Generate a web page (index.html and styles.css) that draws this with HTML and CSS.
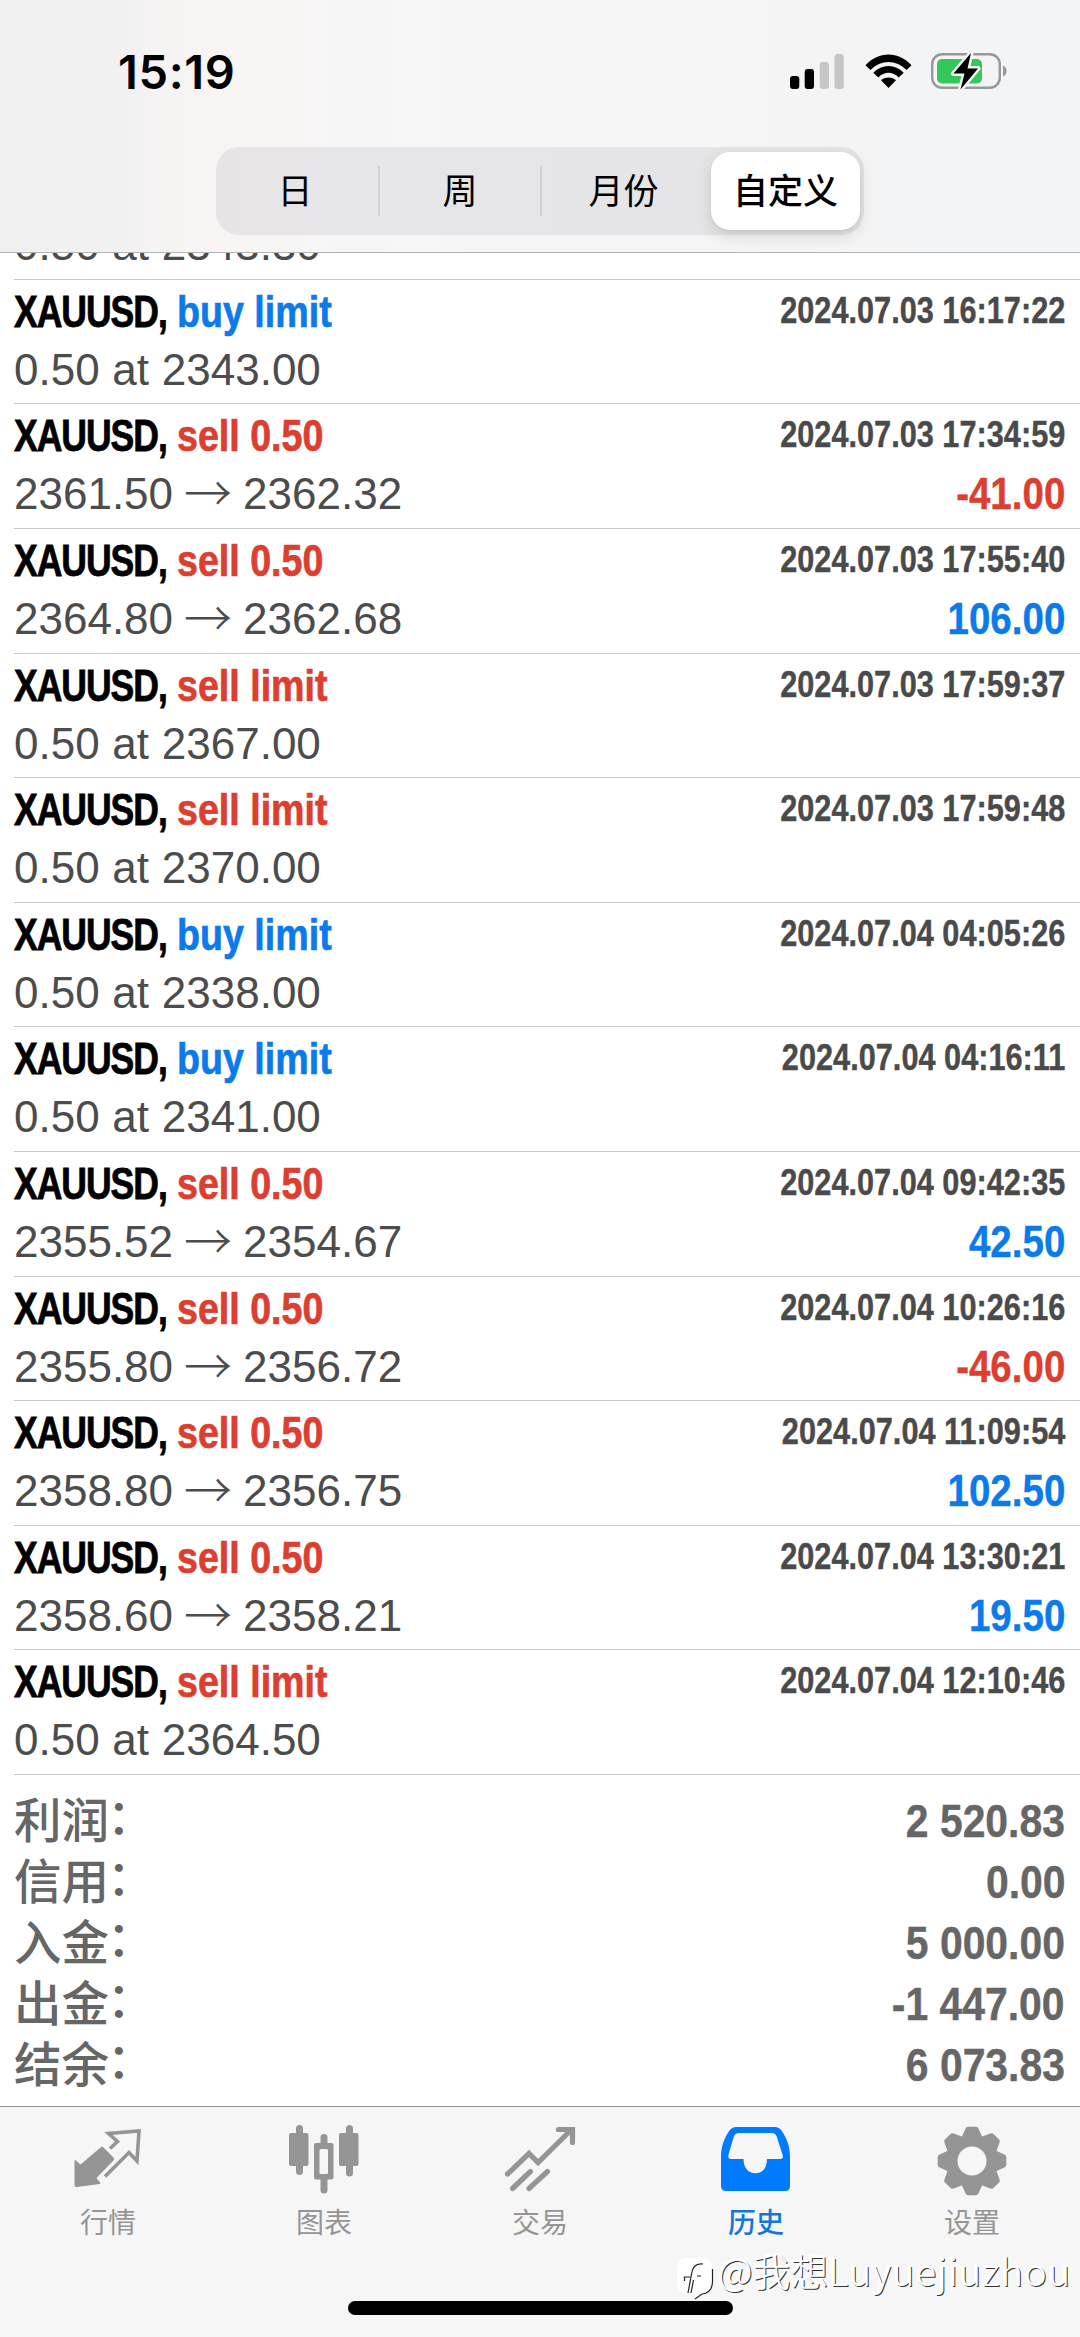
FILE: index.html
```html
<!DOCTYPE html>
<html lang="zh-CN">
<head>
<meta charset="utf-8">
<title>历史</title>
<link rel="stylesheet" href="styles.css">
</head>
<body>
<div class="screen">
  <header class="header">
    <div class="status">
      <span class="clock">15:19</span>
      <div class="status-icons">
        <svg width="54" height="36" viewBox="0 0 54 36"><rect x="0" y="23" width="9.3" height="13" rx="3"/><rect x="14.7" y="16" width="9.3" height="20" rx="3"/><g fill="#c6c6c7"><rect x="29.7" y="9" width="9.3" height="27" rx="3"/><rect x="44.5" y="1" width="9.3" height="35" rx="3"/></g></svg>
        <svg class="wifi" width="47" height="36" viewBox="0 0 47 36"><path d="M0.5 12.2C13.5-2.2 33.5-2.2 46.5 12.2L41.5 17C31.5 6.3 15.5 6.3 5.500 17ZM8.300 19.700C17 10.800 30 10.800 38.700 19.700L33.700 24.500C27.500 18.300 19.500 18.300 13.300 24.500ZM16 27.200C20 23.600 27 23.600 31 27.200L23.500 35Z"/></svg>
        <svg class="battery" width="78" height="42" viewBox="0 0 78 42"><rect x="1.200" y="4.200" width="67.600" height="33.600" rx="10" fill="none" stroke="#98989a" stroke-width="2.400"/><path d="M72 15.500a6 6 0 0 1 0 11z" fill="#98989a"/><rect x="6" y="9" width="45" height="24.500" rx="5" fill="#34c759"/><path d="M40 3 22.500 23.500H33.500L29.500 39.500 47 18.500H36.500Z" stroke="#f5f5f6" stroke-width="5" paint-order="stroke" stroke-linejoin="round"/></svg>
      </div>
    </div>
    <nav class="segments">
      <span class="segment">日</span><span class="segment">周</span><span class="segment">月份</span><span class="segment selected">自定义</span>
    </nav>
  </header>

  <main class="list">
    <div class="row"><div class="left"><p class="title"><span class="symbol">XAUUSD,</span><b class="side buy">buy limit</b></p><p class="detail">0.50 at 2343.30</p></div></div>
    <div class="row"><div class="left"><p class="title"><span class="symbol">XAUUSD,</span><b class="side buy">buy limit</b></p><p class="detail">0.50 at 2343.00</p></div><div class="right"><p class="date">2024.07.03 16:17:22</p></div></div>
    <div class="row"><div class="left"><p class="title"><span class="symbol">XAUUSD,</span><b class="side sell">sell 0.50</b></p><p class="detail">2361.50<i class="arrow">→</i>2362.32</p></div><div class="right"><p class="date">2024.07.03 17:34:59</p><p class="amount sell">-41.00</p></div></div>
    <div class="row"><div class="left"><p class="title"><span class="symbol">XAUUSD,</span><b class="side sell">sell 0.50</b></p><p class="detail">2364.80<i class="arrow">→</i>2362.68</p></div><div class="right"><p class="date">2024.07.03 17:55:40</p><p class="amount buy">106.00</p></div></div>
    <div class="row"><div class="left"><p class="title"><span class="symbol">XAUUSD,</span><b class="side sell">sell limit</b></p><p class="detail">0.50 at 2367.00</p></div><div class="right"><p class="date">2024.07.03 17:59:37</p></div></div>
    <div class="row"><div class="left"><p class="title"><span class="symbol">XAUUSD,</span><b class="side sell">sell limit</b></p><p class="detail">0.50 at 2370.00</p></div><div class="right"><p class="date">2024.07.03 17:59:48</p></div></div>
    <div class="row"><div class="left"><p class="title"><span class="symbol">XAUUSD,</span><b class="side buy">buy limit</b></p><p class="detail">0.50 at 2338.00</p></div><div class="right"><p class="date">2024.07.04 04:05:26</p></div></div>
    <div class="row"><div class="left"><p class="title"><span class="symbol">XAUUSD,</span><b class="side buy">buy limit</b></p><p class="detail">0.50 at 2341.00</p></div><div class="right"><p class="date">2024.07.04 04:16:11</p></div></div>
    <div class="row"><div class="left"><p class="title"><span class="symbol">XAUUSD,</span><b class="side sell">sell 0.50</b></p><p class="detail">2355.52<i class="arrow">→</i>2354.67</p></div><div class="right"><p class="date">2024.07.04 09:42:35</p><p class="amount buy">42.50</p></div></div>
    <div class="row"><div class="left"><p class="title"><span class="symbol">XAUUSD,</span><b class="side sell">sell 0.50</b></p><p class="detail">2355.80<i class="arrow">→</i>2356.72</p></div><div class="right"><p class="date">2024.07.04 10:26:16</p><p class="amount sell">-46.00</p></div></div>
    <div class="row"><div class="left"><p class="title"><span class="symbol">XAUUSD,</span><b class="side sell">sell 0.50</b></p><p class="detail">2358.80<i class="arrow">→</i>2356.75</p></div><div class="right"><p class="date">2024.07.04 11:09:54</p><p class="amount buy">102.50</p></div></div>
    <div class="row"><div class="left"><p class="title"><span class="symbol">XAUUSD,</span><b class="side sell">sell 0.50</b></p><p class="detail">2358.60<i class="arrow">→</i>2358.21</p></div><div class="right"><p class="date">2024.07.04 13:30:21</p><p class="amount buy">19.50</p></div></div>
    <div class="row"><div class="left"><p class="title"><span class="symbol">XAUUSD,</span><b class="side sell">sell limit</b></p><p class="detail">0.50 at 2364.50</p></div><div class="right"><p class="date">2024.07.04 12:10:46</p></div></div>
  </main>

  <section class="totals">
    <p class="total"><span class="label">利润<span class="colon">：</span></span><b>2 520.83</b></p>
    <p class="total"><span class="label">信用<span class="colon">：</span></span><b>0.00</b></p>
    <p class="total"><span class="label">入金<span class="colon">：</span></span><b>5 000.00</b></p>
    <p class="total"><span class="label">出金<span class="colon">：</span></span><b>-1 447.00</b></p>
    <p class="total"><span class="label">结余<span class="colon">：</span></span><b>6 073.83</b></p>
  </section>

  <footer class="tabbar">
    <div class="tab">
      <svg width="72" height="72" viewBox="0 0 72 72"><path d="M28.500 22.500Q30 21 31.500 22.500L41.500 32.500Q43 34 41.500 35.500L24.500 53 28 57.500Q29 58.600 27.500 59L5 62Q2.500 62.300 2.500 60V36Q2.500 34.500 4 35.500L8.500 39.500Z" fill="#959595"/><path d="M38 23.500 45.500 16.500 36.500 8.500 67 6 65 36 57 27.500 33 51.500" fill="none" stroke="#959595" stroke-width="3.600"/></svg>
      <span>行情</span>
    </div>
    <div class="tab">
      <svg width="72" height="72" viewBox="0 0 72 72" fill="#959595"><rect x="8" y="0" width="7" height="50" rx="3.500"/><rect x="1" y="8" width="19.500" height="33" rx="2"/><rect x="58" y="0" width="7" height="51.500" rx="3.500"/><rect x="51" y="8" width="19.500" height="33" rx="2"/><rect x="32.500" y="9" width="7" height="15" rx="3.500"/><rect x="32.500" y="50" width="7" height="18.500" rx="3.500"/><path fill-rule="evenodd" d="M28 18h15.500q2 0 2 2v32.500q0 2-2 2H28q-2 0-2-2V20q0-2 2-2ZM33 24q-1.500 0-1.500 1.500V47.500q0 1.500 1.500 1.500h5.500q1.500 0 1.500-1.500V25.500q0-1.500-1.500-1.500Z"/></svg>
      <span>图表</span>
    </div>
    <div class="tab">
      <svg width="72" height="72" viewBox="0 0 72 72" fill="none" stroke="#959595" stroke-width="5.200" stroke-linecap="round" stroke-linejoin="miter"><path d="M3.500 49 25 28.500 34 37.500 67 5M54.500 4.500H68.500V17.500"/><path d="M8.500 63.500 26.500 46.500M25 63.500 43.500 46.500"/></svg>
      <span>交易</span>
    </div>
    <div class="tab active">
      <svg width="72" height="72" viewBox="0 0 72 72"><path fill="#007aff" fill-rule="evenodd" d="M16 2H55Q59 2 61.500 5.500C67 13.500 70 22 70 32V61Q70 66 65 66H6Q1 66 1 61V32C1 22 4 13.500 9.500 5.500Q12 2 16 2ZM19 8Q15.500 8 14 11L8.500 29.500Q7.500 34 11 34H23.500C23.500 43 28.500 48.300 35.300 48.300 42.500 48.300 47 43 47 34H60Q64 34 62.500 29.500L56.500 11Q55 8 52 8Z"/></svg>
      <span>历史</span>
    </div>
    <div class="tab">
      <svg width="72" height="72" viewBox="-36 -36 72 72"><g fill="#959595" stroke="#959595" stroke-width="5" stroke-linejoin="round"><g id="teeth"><path d="M-4-31.800H4L9-21V21L4 31.800H-4L-9 21V-21Z"/><path transform="rotate(45)" d="M-4-31.800H4L9-21V21L4 31.800H-4L-9 21V-21Z"/></g><use href="#teeth" transform="rotate(90)"/></g><circle r="14.500" fill="#f6f6f6"/></svg>
      <span>设置</span>
    </div>
    <div class="home"></div>
    <div class="watermark">
      <svg width="40" height="44" viewBox="0 0 40 44"><path d="M11 2H26Q38 2 38 14V25Q38 37 28 38L20 43 20 38H11Q2 38 2 28V12Q2 2 11 2Z" fill="#fff"/><path d="M28 8C21 7 17.500 11 16.500 18L13 37M9.500 25V21H15M22 20H26M18.500 24 16 37M37.500 13V26Q37 37 27 38L20 43" fill="none" stroke="#222" stroke-width="1.200"/></svg>
      <span>@我想<span class="handle">Luyuejiuzhou</span></span>
    </div>
  </footer>
</div>
</body>
</html>
```
FILE: styles.css
```css
* { box-sizing: border-box; margin: 0; padding: 0; }
body { background: #fff; font-family: "Liberation Sans", "Noto Sans CJK SC", sans-serif; }
.screen { width: 1080px; height: 2337px; display: flex; flex-direction: column; overflow: hidden; background: #fff; }

.header { height: 253px; flex: none; border-bottom: 1px solid #b5b5b6; background: linear-gradient(90deg, #f0f0f0 0, #f2f1f2 11%, #f8f4f3 19%, #f7f5f5 29%, #f6f6f6 38%, #f4f4f5 78%, #f3f4f8 100%); display: flex; flex-direction: column; align-items: center; }
.status { width: 100%; height: 147px; padding: 0 71px 0 118px; display: flex; justify-content: space-between; align-items: flex-start; }
.clock { font: 600 47px/56px Inter, sans-serif; letter-spacing: 0.6px; padding-top: 44px; }
.status-icons { display: flex; align-items: flex-start; padding-top: 53px; }
.wifi { margin-left: 21px; }
.battery { margin: -3px 0 0 19px; }

.segments { display: grid; grid-template-columns: repeat(4, 162px); width: 648px; height: 88px; border-radius: 23px; background: rgba(118, 118, 128, 0.12); align-items: center; }
.segment { height: 50px; text-align: center; font: 400 35px/46px "Noto Sans CJK SC", sans-serif; color: #000; border-left: 2px solid #d2d2d4; }
.segment:first-child { border: 0; padding-right: 4px; }
.segment:nth-child(3) { padding-left: 3px; }
.segment.selected { font-weight: 500; height: 78px; line-height: 74px; margin: 0 4px 0 9px; border: 0; border-radius: 19px; background: #fff; box-shadow: 0 6px 16px rgba(0, 0, 0, 0.12), 0 1px 3px rgba(0, 0, 0, 0.06); }

.list { height: 1522px; flex: none; overflow: hidden; display: flex; flex-direction: column; justify-content: flex-end; padding-left: 14px; }
.row { height: 124.6px; flex: none; border-bottom: 1px solid #c8c8c9; display: flex; justify-content: space-between; padding: 3px 15px 0 0; }

/* Bold text is set condensed by narrowing the regular bold face. */
.title { display: flex; height: 57px; font: 700 45px/57px "Liberation Sans", sans-serif; color: #000; white-space: nowrap; }
.symbol { width: 163px; letter-spacing: -1.3px; transform: scaleX(0.79); transform-origin: left; -webkit-text-stroke: 0.8px; }
.side { transform: scaleX(0.836); transform-origin: left; -webkit-text-stroke: 0.7px; }
.buy { color: #0b7aeb; }
.sell { color: #dc3e30; }
.detail { font-size: 44px; line-height: 59px; color: #4c4c4c; white-space: nowrap; word-spacing: 0.5px; }
.arrow { display: inline-block; width: 70px; text-align: center; font: 300 48px/44px "Noto Sans CJK SC", sans-serif; transform: translateY(2px); }
.right { text-align: right; white-space: nowrap; }
.date { font: 700 36px/56px "Liberation Sans", sans-serif; color: #4a4a4b; transform: scaleX(0.853); transform-origin: right; -webkit-text-stroke: 0.4px; }
.amount { font: 700 44px/59px "Liberation Sans", sans-serif; padding-top: 1px; transform: scaleX(0.875); transform-origin: right; -webkit-text-stroke: 0.4px; }

.totals { flex: none; height: 331px; padding: 15px 15px 0 14px; color: #666; }
.total { display: flex; justify-content: space-between; height: 61px; }
.label { font: 500 47.5px/55px "Noto Sans CJK SC", sans-serif; }
.colon { display: inline-block; transform: translate(-2px, -4px); line-height: 50px; }
.total b { font: 700 47px/61px "Liberation Sans", sans-serif; transform: scaleX(0.87); transform-origin: right; -webkit-text-stroke: 0.4px; }

.tabbar { flex: none; position: relative; height: 231px; border-top: 1px solid #929292; background: #f6f6f6; display: grid; grid-template-columns: repeat(5, 216px); }
.tab { display: flex; flex-direction: column; align-items: center; padding-top: 18px; }
.tab svg { flex: none; }
.tab span { font: 400 28px/40px "Noto Sans CJK SC", sans-serif; color: #959595; margin-top: 4px; }
.tab.active span { color: #1277dc; font-weight: 500; }
.home { position: absolute; left: 348px; top: 194px; width: 385px; height: 14px; border-radius: 7px; background: #000; }
.watermark { position: absolute; left: 675px; top: 149px; display: flex; align-items: flex-start; font: 300 38px/46px "Noto Sans CJK SC", sans-serif; color: #fff; white-space: nowrap; text-shadow: 1px 1px 0 #333, -1px -1px 1px #fff; }
.watermark > span { margin: -9px 0 0 3px; }
.handle { letter-spacing: 1.1px; }
```
